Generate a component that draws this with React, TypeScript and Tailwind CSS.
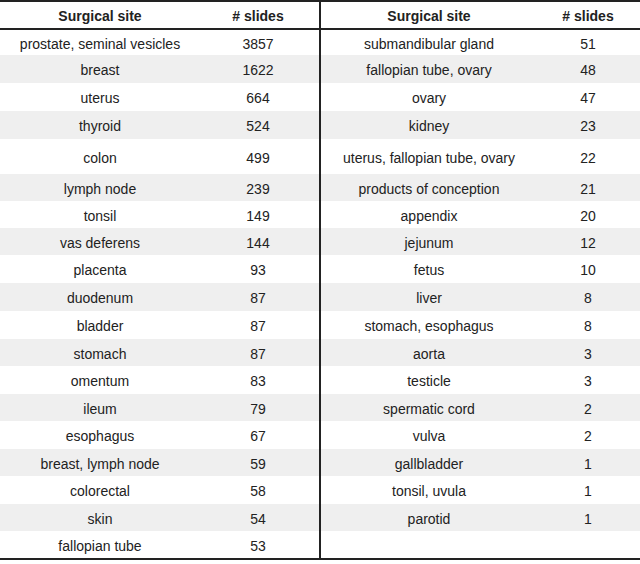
import React from "react";

const heights = [
  "h-[25px]",
  "h-[28px]",
  "h-[28px]",
  "h-[28px]",
  "h-[35px]",
  "h-[27px]",
  "h-[27px]",
  "h-[27px]",
  "h-[28px]",
  "h-[28px]",
  "h-[28px]",
  "h-[27px]",
  "h-[28px]",
  "h-[27px]",
  "h-[28px]",
  "h-[27px]",
  "h-[28px]",
  "h-[27px]",
  "h-[27px]",
];

const left: [string, string][] = [
  ["prostate, seminal vesicles", "3857"],
  ["breast", "1622"],
  ["uterus", "664"],
  ["thyroid", "524"],
  ["colon", "499"],
  ["lymph node", "239"],
  ["tonsil", "149"],
  ["vas deferens", "144"],
  ["placenta", "93"],
  ["duodenum", "87"],
  ["bladder", "87"],
  ["stomach", "87"],
  ["omentum", "83"],
  ["ileum", "79"],
  ["esophagus", "67"],
  ["breast, lymph node", "59"],
  ["colorectal", "58"],
  ["skin", "54"],
  ["fallopian tube", "53"],
];

const right: [string, string][] = [
  ["submandibular gland", "51"],
  ["fallopian tube, ovary", "48"],
  ["ovary", "47"],
  ["kidney", "23"],
  ["uterus, fallopian tube, ovary", "22"],
  ["products of conception", "21"],
  ["appendix", "20"],
  ["jejunum", "12"],
  ["fetus", "10"],
  ["liver", "8"],
  ["stomach, esophagus", "8"],
  ["aorta", "3"],
  ["testicle", "3"],
  ["spermatic cord", "2"],
  ["vulva", "2"],
  ["gallbladder", "1"],
  ["tonsil, uvula", "1"],
  ["parotid", "1"],
  ["", ""],
];

const Half = ({
  rows,
  cols,
  className,
}: {
  rows: [string, string][];
  cols: string;
  className?: string;
}) => {
  return (
    <div className={className}>
      <div className={`grid ${cols} h-[28px] pt-[2px] items-center border-b-2 border-[#222] font-bold`}>
        <div className="text-center">Surgical site</div>
        <div className="text-center"># slides</div>
      </div>
      {rows.map(([site, n], i) => (
        <div
          key={i}
          className={`grid ${cols} ${heights[i]} pt-[3px] items-center ${i % 2 === 1 ? "bg-[#efefef]" : "bg-white"}`}
        >
          <div className="text-center">{site}</div>
          <div className="text-center">{n}</div>
        </div>
      ))}
    </div>
  );
};

export default function App() {
  return (
    <div className="w-[640px] h-[564px] bg-white text-[14px] text-[#222] font-['Liberation_Sans',Arial,sans-serif]">
      <div className="flex border-t-2 border-b-2 border-[#222]">
        <Half
          rows={left}
          cols="grid-cols-[200px_116px]"
          className="w-[321px] border-r-2 border-[#222]"
        />
        <Half rows={right} cols="grid-cols-[216px_102px]" className="flex-1" />
      </div>
    </div>
  );
}
